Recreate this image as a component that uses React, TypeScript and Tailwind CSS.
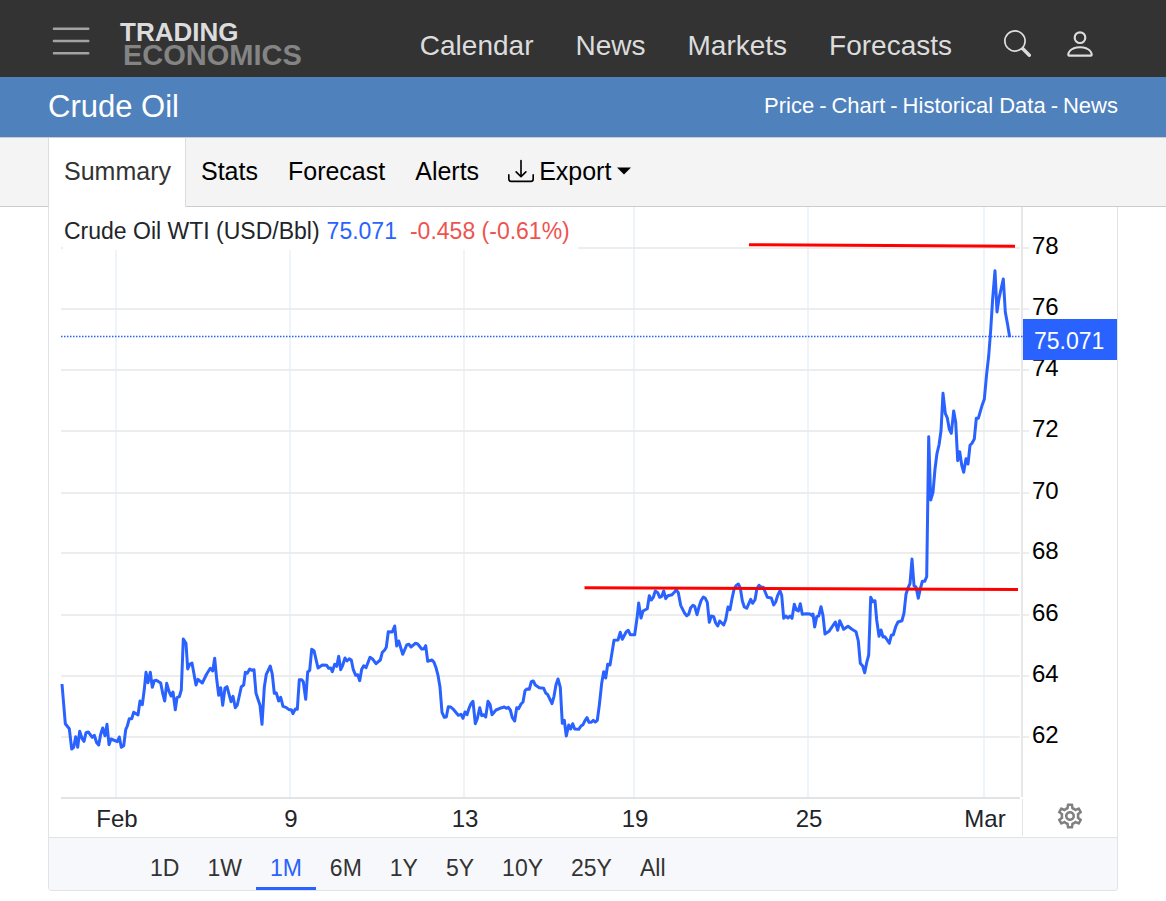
import { BsDownload, BsPerson, BsSearch } from "react-icons/bs";
import { MdOutlineSettings } from "react-icons/md";

const NAV = ["Calendar", "News", "Markets", "Forecasts"];
const SECTIONS = ["Price", "Chart", "Historical Data", "News"];
const TABS = ["Stats", "Forecast", "Alerts"];
const RANGES = ["1D", "1W", "1M", "6M", "1Y", "5Y", "10Y", "25Y", "All"];

const Y_AXIS = [
  { label: "78", y: 248 },
  { label: "76", y: 309 },
  { label: "74", y: 370 },
  { label: "72", y: 431 },
  { label: "70", y: 493 },
  { label: "68", y: 553 },
  { label: "66", y: 615 },
  { label: "64", y: 676 },
  { label: "62", y: 737 },
];

const X_AXIS = [
  { label: "Feb", x: 116 },
  { label: "9", x: 290 },
  { label: "13", x: 464 },
  { label: "19", x: 634 },
  { label: "25", x: 808 },
  { label: "Mar", x: 984 },
];

const PRICE_LINE = `
62,684 65.3,723.7 69.3,728.7 71.7,749 73.7,747.3 75.7,736.7 77.7,747.3 79.7,731.3 82,738.3 84,741.3
86,732.7 88.3,732 92.3,737.3 94.3,735.3 96.7,742.7 98.7,745 100.7,734.3 102.7,728 105,735.7 107,724.3
109,744.7 111,739 117.3,741.7 119.3,737 121.3,747.3 123.7,745.7 125.7,729.7 127.3,726 129.3,718.7
131.7,718.7 133.7,712.3 138,715 140,701 142.3,704.7 144.3,689.3 146,672.3 148,682.7 150.3,672.3
152.3,687.3 154.3,680.7 156.3,680.3 160.7,683 162.7,693.3 164.7,701 166.7,683.3 169,691.3 171,696
173,692 175.3,709.7 177,697.7 179.3,696.7 181.3,690 183.3,639 186,643.3 187.7,669 189.7,664.3 192,663
196,685 198,679.3 202.3,683 206.7,674 210.3,668.3 212.7,671 214.7,658.3 216.7,679.3 218.7,695.3
220.7,687.7 222.7,705.3 225,688 227,686.7 231,701.7 233,696.3 235.3,707.7 237.3,705 241.3,686.7
243.7,685 245.3,672.3 247.3,673.3 249.7,669 251.7,670.3 254,669.7 256,693.3 260,705.3 262,724.3
264.3,687.3 266.3,674.3 270.3,666 272.3,674.3 274.3,693.3 276.3,693 278.7,701 280.7,697.3 283,706.3
286,707.3 289,709.7 291.3,709.7 293,713.7 295.3,709 297.3,709.3 299.3,679.7 301.7,679.7 303.3,681.7
305.7,699.3 307.7,672 309.7,670.3 311.7,649.3 314,650.7 318,668 322.3,665 326.7,665.3 328.7,668.3
330.7,668 332.3,671.7 334.7,664.3 336.7,666.3 338.7,656.3 340.7,669.7 342.7,665.3 345,658 347,661
349.3,658.7 351.3,660 353.3,669.7 355.7,675.3 357.7,674.7 359.7,680.7 361.7,669.3 363.7,665.7 366,667.7
370,657.3 372.3,658.7 376,663.7 380.3,660 382.3,652.3 384.7,650 386.3,647.3 388.3,631.7 392.3,632
394.7,626 396.7,646 398.7,641 402.7,654.3 406.7,645 409,644.3 411,647 415.3,643.3 417.7,644 421.7,649
423.7,649 425.7,645.7 427.7,661.3 432,660 434,662.3 436,667.7 438,675.3 440,687.3 442,712.3 444.3,717.3
446.3,717 448.3,706.7 450.7,707 453.7,709.7 458.3,715.3 461,714.3 463,718.3 465,712 467,714.7 469,708.3
471,703.7 473,701.3 475.3,723.7 477.3,718.7 479.7,707.7 481.7,715.7 483.7,714.7 485.7,717 488,701.3
490,704.3 492,714.7 496,710 500,708.3 504.3,707 506.3,708.3 508.3,707.3 510.3,710 512.3,717.7 514.7,721
516.7,707.7 518.7,708.7 521,704 523,702 525,690.7 527,689 529.3,689.3 531.3,681.7 533.3,681 535.3,685
539.3,687.7 543.7,688.3 545.7,693 547.7,694.7 552,703.7 554,696.3 556,684.7 558,679 560.3,687.3
562.3,723.3 564.3,720.3 566.3,736 568.7,725 570.7,729 572.7,723.7 574.7,729 578.7,729.3 581,726
583,724.7 585,720.7 587,717.7 589,722.3 591.3,722.3 593.3,720.3 595.3,722 597.3,720.3 599.3,705.3
601.7,683.3 603.7,671.7 605.7,678 607.7,664.3 610,665 612,652.7 614,640.3 618,640 620.3,632.3
622.3,639.3 626.3,631.7 628.3,630.3 630.3,634.7 634.7,634.7 637,618.3 638.7,603 641,618 643,611
647.3,608.7 649.3,595.7 651.3,600 653.3,597.3 655.3,591 657.7,592.7 659.7,597.3 661.7,596.3 663.7,591
665.7,598.7 668,595.7 672,594.7 674.3,592.3 676.3,590 678.3,592.7 680.7,605.3 684.3,612.7 686.7,615.7
688.7,614.3 690.7,607.7 693,605.3 694.7,606.3 697,614.7 699,607 701,600.7 703.3,597 705.3,598.3
707.3,602.3 709.3,622.3 711.3,616 713.7,616.7 715.7,623 717.7,626 719.7,621 723.7,625 725.7,619.7
728,607 730,609.7 732,598.7 734.3,588.3 736,585.7 738.3,584 740.3,588 742.3,600.7 744.3,607
746.7,608.3 750.7,599.3 752.7,603.3 755,599.7 757,588.3 759,585.3 761,587 763.3,587.3 765.3,592.3
767.3,597.3 771.3,598 773.7,605 775.7,602 777.7,595.3 780,590.7 781.7,595.3 783.7,618.3 785.7,616
788,618 790,616 792,618.3 794.3,604.3 796.3,610 798.3,611 800.3,603.7 802.3,614.3 806.7,613.7 810,614
812,615.7 813,614 814.7,627 816.7,616.7 818.7,616 821,606.7 823,615.7 825,634 829,631.3 835.3,622
837.7,630.3 839.7,620.7 843.7,629.3 848,626.3 852,629.3 856,631.7 858.3,641 860.3,663.3 862.7,666
864.7,672.7 866.7,662.7 868.7,655 870.7,597.3 873,601.7 875,600.7 876.7,620 879,636.3 881,630 883,637
885,636.7 889.3,643.3 891.3,635.3 893.3,634.7 895.7,626.7 898,622 902,620.7 904,613 906,594.3 908,588
910,583.7 912,559 914,585.7 916,587 918.3,598.3 920.3,589 922.3,581.3 924.7,581.3 926.7,576.7
928.7,436.7 930.7,500 933,492.3 935,469 937,453.3 939,445 941,431 943,393.3 945.3,413.3 947.3,418
949.3,429.3 951.3,433.3 953.7,411 955.7,422.3 957.7,460.7 959.7,451.7 961.7,465 963.7,472.3 966,458.7
968,464 970,445.3 972,443.3 974.3,439 976.3,418.3 978.3,418.3 982.3,404.7 984.3,399.3 986.7,373.3
988.7,356 990.7,330 992.7,298.3 995,270.7 997,312 999,298.3 1003.3,279 1005.3,312 1007.7,325
1009.7,337.3`;

function Header() {
  return (
    <header className="flex items-center bg-[#333333] pt-[13px] pr-[69px] pl-[52px]">
      <button type="button" aria-label="Menu" className="pb-2">
        <svg width="38" height="30" viewBox="0 0 38 30" stroke="#a3a3a3" strokeWidth="2.4" strokeLinecap="round">
          <path d="M1.9 2.7H36.3M1.9 15H36.3M1.9 27.3H36.3" />
        </svg>
      </button>
      <a href="#home" className="ml-[30px] flex flex-col pb-1 font-bold">
        <span className="text-[26px] leading-6 text-[#dcdcdc]">TRADING</span>
        <span className="pl-[3px] text-[29px] leading-[22px] text-[#848484]">ECONOMICS</span>
      </a>
      <nav className="ml-auto flex h-16 items-center gap-[42px] pt-0.5 text-[28px] text-[#dcdcdc]">
        {NAV.map((item) => (
          <a key={item} href={`#${item.toLowerCase()}`}>
            {item}
          </a>
        ))}
      </nav>
      <button type="button" aria-label="Search" className="ml-[52px] pb-1 text-[27px] text-[#dcdcdc]">
        <BsSearch />
      </button>
      <button type="button" aria-label="Account" className="ml-8 pb-0.5 text-[34px] text-[#dcdcdc]">
        <BsPerson />
      </button>
    </header>
  );
}

function TitleBar() {
  return (
    <div className="flex h-[60px] items-center justify-between bg-[#4f81bc] px-12 text-white">
      <h1 className="text-[31px]">Crude Oil</h1>
      <nav className="flex gap-[5px] pb-1 text-[22px]">
        {SECTIONS.map((item, i) => (
          <span key={item} className="flex gap-[5px]">
            {i > 0 && <span>-</span>}
            <a href={`#section-${i}`}>{item}</a>
          </span>
        ))}
      </nav>
    </div>
  );
}

function TabBar() {
  return (
    <nav className="flex border-y border-[#cccccc] bg-[#f4f4f4] px-12 text-[25px] leading-9 text-black">
      <a href="#summary" className="-mb-px border-x border-[#dcdcdc] bg-white pt-[15px] pr-[14px] pb-[18px] pl-[15px] text-[#333333]">
        Summary
      </a>
      {TABS.map((tab) => (
        <a key={tab} href={`#${tab.toLowerCase()}`} className="px-[15px] pt-[15px] pb-[17px]">
          {tab}
        </a>
      ))}
      <button type="button" className="flex items-center px-[14px] pt-[15px] pb-[17px]">
        <BsDownload className="text-[26px]" />
        <span className="ml-[5px]">Export</span>
        <svg className="ml-[6px]" width="14" height="8" viewBox="0 0 14 8">
          <path d="M0 0.5H14L7 7.5Z" fill="currentColor" />
        </svg>
      </button>
    </nav>
  );
}

function PriceChart() {
  return (
    <div className="relative">
      <svg viewBox="49 207 1068 630" className="block w-full" role="img" aria-label="Crude Oil WTI price, one month">
        <g stroke="#eff4f9" strokeWidth="2">
          {X_AXIS.map(({ label, x }) => (
            <line key={label} x1={x} x2={x} y1="207" y2="797" />
          ))}
        </g>
        <g stroke="#e7e7e7" strokeWidth="1.6">
          {Y_AXIS.map(({ label, y }) => (
            <path key={label} d={`M61 ${y}H1020M1023 ${y}H1029`} />
          ))}
        </g>
        <path d="M61 798H1020" stroke="#e3e3e3" strokeWidth="2" />
        <path d="M1022 207V797" stroke="#e7e7e7" strokeWidth="2" />
        <path d="M1022.5 799V836" stroke="#e3e4e8" />
        <path d="M61 336.5H1023" stroke="#2962ff" strokeWidth="1.5" strokeDasharray="1.5 1.5" />
        <polyline points={PRICE_LINE} fill="none" stroke="#2962ff" strokeWidth="3" strokeLinejoin="round" />
        <g stroke="#ff0000" strokeWidth="3">
          <path d="M749 244.7L1015 246.3" />
          <path d="M584.5 587.7L1018 589.4" />
        </g>
        <g className="fill-black text-[24px]">
          {Y_AXIS.map(({ label, y }) => (
            <text key={label} x="1032" y={y + 6}>
              {label}
            </text>
          ))}
        </g>
        <g className="fill-[#212529] text-[24px]" textAnchor="middle">
          {X_AXIS.map(({ label, x }) => (
            <text key={label} x={x + 1} y="827">
              {label}
            </text>
          ))}
        </g>
        <rect x="1023" y="319" width="94" height="41" fill="#2962ff" />
        <text x="1034" y="349" className="fill-white text-[23px]">
          75.071
        </text>
      </svg>
      <p className="absolute top-0 left-[14px] flex h-[43px] items-center bg-white pt-[5px] pr-2 pl-px text-[23px] text-[#212529]">
        <span>Crude Oil WTI (USD/Bbl)</span>
        <span className="ml-[7px] text-[#2962ff]">75.071</span>
        <span className="ml-[13px] text-[#ef5350]">-0.458 (-0.61%)</span>
      </p>
      <button type="button" aria-label="Chart settings" className="absolute right-8 bottom-[6px] text-[30px] text-[#808080]">
        <MdOutlineSettings />
      </button>
    </div>
  );
}

function RangeBar() {
  return (
    <div className="flex border-t border-[#e0e3e8] bg-[#f7f8fb] pl-[87px] text-[23px] text-[#333333]">
      {RANGES.map((range) => (
        <button
          key={range}
          type="button"
          className={
            range === "1M"
              ? "h-[52px] border-b-[3px] border-[#2962ff] px-[14px] pt-[11px] text-[#2962ff]"
              : "h-[52px] border-b-[3px] border-transparent px-[14px] pt-[11px]"
          }
        >
          {range}
        </button>
      ))}
    </div>
  );
}

export default function App() {
  return (
    <div className="min-h-screen bg-white font-['Liberation_Sans',Arial,sans-serif]">
      <Header />
      <TitleBar />
      <TabBar />
      <main className="mx-12 overflow-hidden rounded-b border border-t-0 border-[#e0e3e8]">
        <PriceChart />
        <RangeBar />
      </main>
    </div>
  );
}
